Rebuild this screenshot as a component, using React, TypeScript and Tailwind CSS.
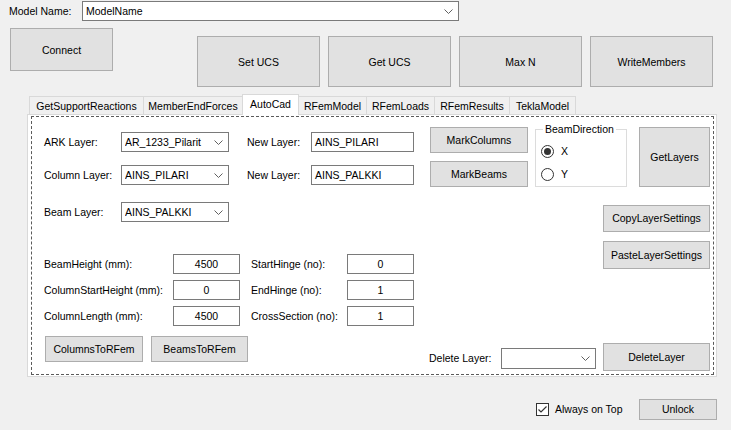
import React from "react";

function Chevron() {
  return (
    <svg width="9" height="5" viewBox="0 0 9 5" className="shrink-0">
      <polyline points="0.5,0.5 4.5,4.5 8.5,0.5" fill="none" stroke="#606060" strokeWidth="1" />
    </svg>
  );
}

function Btn({ className = "", children }: { className?: string; children?: React.ReactNode }) {
  return (
    <div className={"flex items-center justify-center border border-[#adadad] bg-[#e1e1e1] whitespace-nowrap " + className}>
      {children}
    </div>
  );
}

function Combo({ className = "", children }: { className?: string; children?: React.ReactNode }) {
  return (
    <div className={"flex items-center border border-[#7a7a7a] bg-white pl-[3px] pr-[5px] " + className}>
      <div className="flex-1 whitespace-nowrap overflow-hidden">{children}</div>
      <Chevron />
    </div>
  );
}

function TextBox({ className = "", children }: { className?: string; children?: React.ReactNode }) {
  return (
    <div className={"flex items-center border border-[#7a7a7a] bg-white whitespace-nowrap " + className}>
      {children}
    </div>
  );
}

function Radio({ checked, label, className = "" }: { checked?: boolean; label: string; className?: string }) {
  return (
    <div className={"flex items-center h-[13px] " + className}>
      <svg width="13" height="13" viewBox="0 0 13 13" className="shrink-0">
        <circle cx="6.5" cy="6.5" r="6" fill="white" stroke="#333333" strokeWidth="1" />
        {checked && <circle cx="6.5" cy="6.5" r="3.5" fill="#333333" />}
      </svg>
      <span className="ml-[7px]">{label}</span>
    </div>
  );
}

const tabs: { label: string; w: string; selected?: boolean }[] = [
  { label: "GetSupportReactions", w: "w-[115px]" },
  { label: "MemberEndForces", w: "w-[100px]" },
  { label: "AutoCad", w: "w-[57px]", selected: true },
  { label: "RFemModel", w: "w-[69px]" },
  { label: "RFemLoads", w: "w-[69px]" },
  { label: "RFemResults", w: "w-[76px]" },
  { label: "TeklaModel", w: "w-[67px]" },
];

export default function App() {
  return (
    <div className="w-[731px] h-[430px] overflow-hidden bg-[#f0f0f0] text-[10.5px] leading-[13px] text-black font-['Liberation_Sans',Arial,sans-serif] flex flex-col">
      {/* Model name row */}
      <div className="flex items-center mt-px h-[20px]">
        <div className="ml-[9px] w-[73px] whitespace-nowrap">Model Name:</div>
        <Combo className="w-[377px] h-[20px]">ModelName</Combo>
      </div>

      {/* Buttons row */}
      <div className="flex items-start mt-[7px]">
        <Btn className="ml-[10px] w-[103px] h-[43px] pt-[2px]">Connect</Btn>
        <div className="flex gap-[8px] ml-[84px] mt-[8px]">
          <Btn className="w-[123px] h-[51px] pt-[2px]">Set UCS</Btn>
          <Btn className="w-[123px] h-[51px] pt-[2px]">Get UCS</Btn>
          <Btn className="w-[123px] h-[51px] pt-[2px]">Max N</Btn>
          <Btn className="w-[123px] h-[51px] pt-[2px]">WriteMembers</Btn>
        </div>
      </div>

      {/* Tab strip */}
      <div className="flex items-end h-[20px] mt-[7px] ml-[29px]">
        {tabs.map((t, i) =>
          t.selected ? (
            <div
              key={t.label}
              className={"relative z-10 -ml-px h-[21px] -mb-px flex items-center justify-center pb-[2px] border-l border-t border-r border-[#d9d9d9] bg-white whitespace-nowrap " + t.w}
            >
              {t.label}
            </div>
          ) : (
            <div
              key={t.label}
              className={(i === 0 ? "" : "-ml-px ") + "h-[18px] flex items-center justify-center pt-px border-l border-t border-r border-[#d9d9d9] bg-[#f0f0f0] whitespace-nowrap " + t.w}
            >
              {t.label}
            </div>
          )
        )}
      </div>

      {/* Tab page */}
      <div className="ml-[27px] w-[690px] h-[263px] border border-[#d9d9d9] bg-white">
        <div className="ml-[3px] mt-px w-[683px] h-[259px] border border-dashed border-[#5a5a5a] flex">
          {/* Left block */}
          <div className="w-[397px] flex flex-col pl-[12px] pt-[15px]">
            <div className="flex items-center h-[20px]">
              <div className="w-[77px] whitespace-nowrap">ARK Layer:</div>
              <Combo className="w-[108px] h-[20px]">AR_1233_Pilarit</Combo>
              <div className="ml-[18px] w-[64px] whitespace-nowrap">New Layer:</div>
              <TextBox className="w-[103px] h-[20px] pl-[3px]">AINS_PILARI</TextBox>
            </div>
            <div className="flex items-center h-[20px] mt-[13px]">
              <div className="w-[77px] whitespace-nowrap">Column Layer:</div>
              <Combo className="w-[108px] h-[20px]">AINS_PILARI</Combo>
              <div className="ml-[18px] w-[64px] whitespace-nowrap">New Layer:</div>
              <TextBox className="w-[103px] h-[20px] pl-[3px]">AINS_PALKKI</TextBox>
            </div>
            <div className="flex items-center h-[20px] mt-[17px]">
              <div className="w-[77px] whitespace-nowrap">Beam Layer:</div>
              <Combo className="w-[108px] h-[20px]">AINS_PALKKI</Combo>
            </div>

            <div className="flex items-center h-[20px] mt-[32px]">
              <div className="w-[129px] whitespace-nowrap">BeamHeight (mm):</div>
              <TextBox className="w-[67px] h-[20px] justify-center">4500</TextBox>
              <div className="ml-[11px] w-[96px] whitespace-nowrap">StartHinge (no):</div>
              <TextBox className="w-[67px] h-[20px] justify-center">0</TextBox>
            </div>
            <div className="flex items-center h-[20px] mt-[6px]">
              <div className="w-[129px] whitespace-nowrap">ColumnStartHeight (mm):</div>
              <TextBox className="w-[67px] h-[20px] justify-center">0</TextBox>
              <div className="ml-[11px] w-[96px] whitespace-nowrap">EndHinge (no):</div>
              <TextBox className="w-[67px] h-[20px] justify-center">1</TextBox>
            </div>
            <div className="flex items-center h-[20px] mt-[6px]">
              <div className="w-[129px] whitespace-nowrap">ColumnLength (mm):</div>
              <TextBox className="w-[67px] h-[20px] justify-center">4500</TextBox>
              <div className="ml-[11px] w-[96px] whitespace-nowrap">CrossSection (no):</div>
              <TextBox className="w-[67px] h-[20px] justify-center">1</TextBox>
            </div>

            <div className="flex mt-[10px]">
              <Btn className="ml-px w-[98px] h-[26px]">ColumnsToRFem</Btn>
              <Btn className="ml-[8px] w-[97px] h-[26px]">BeamsToRFem</Btn>
            </div>
          </div>

          {/* Right block */}
          <div className="flex-1 flex flex-col pt-[10px] pr-[3px]">
            <div className="flex items-start h-[60px]">
              <div className="ml-px flex flex-col w-[98px]">
                <Btn className="h-[26px]">MarkColumns</Btn>
                <Btn className="mt-[8px] h-[26px]">MarkBeams</Btn>
              </div>
              <div className="relative ml-[7px] mt-[2px] w-[92px] h-[58px] border border-[#dcdcdc] pl-[5px] pt-[15px]">
                <div className="absolute -top-[7px] left-[7px] bg-white px-[2px] whitespace-nowrap">BeamDirection</div>
                <Radio checked label="X" />
                <Radio label="Y" className="mt-[10px]" />
              </div>
              <Btn className="ml-[12px] w-[71px] h-[60px]">GetLayers</Btn>
            </div>
            <Btn className="self-end mt-[18px] w-[107px] h-[27px]">CopyLayerSettings</Btn>
            <Btn className="self-end mt-[9px] w-[107px] h-[28px]">PasteLayerSettings</Btn>
            <div className="flex items-start mt-[74px]">
              <div className="w-[72px] h-[21px] mt-[5px] flex items-center whitespace-nowrap">Delete Layer:</div>
              <Combo className="w-[95px] h-[21px] mt-[5px]"></Combo>
              <Btn className="ml-[7px] w-[107px] h-[28px]">DeleteLayer</Btn>
            </div>
          </div>
        </div>
      </div>

      {/* Footer */}
      <div className="flex items-center mt-[22px] h-[21px]">
        <svg width="13" height="13" viewBox="0 0 13 13" className="ml-[536px] shrink-0">
          <rect x="0.5" y="0.5" width="12" height="12" fill="white" stroke="#333333" strokeWidth="1" />
          <polyline points="2.5,6.5 5,9 10.5,3.5" fill="none" stroke="#333333" strokeWidth="1.2" />
        </svg>
        <span className="ml-[6px] whitespace-nowrap">Always on Top</span>
        <Btn className="ml-auto mr-[14px] w-[78px] h-[21px]">Unlock</Btn>
      </div>
    </div>
  );
}
